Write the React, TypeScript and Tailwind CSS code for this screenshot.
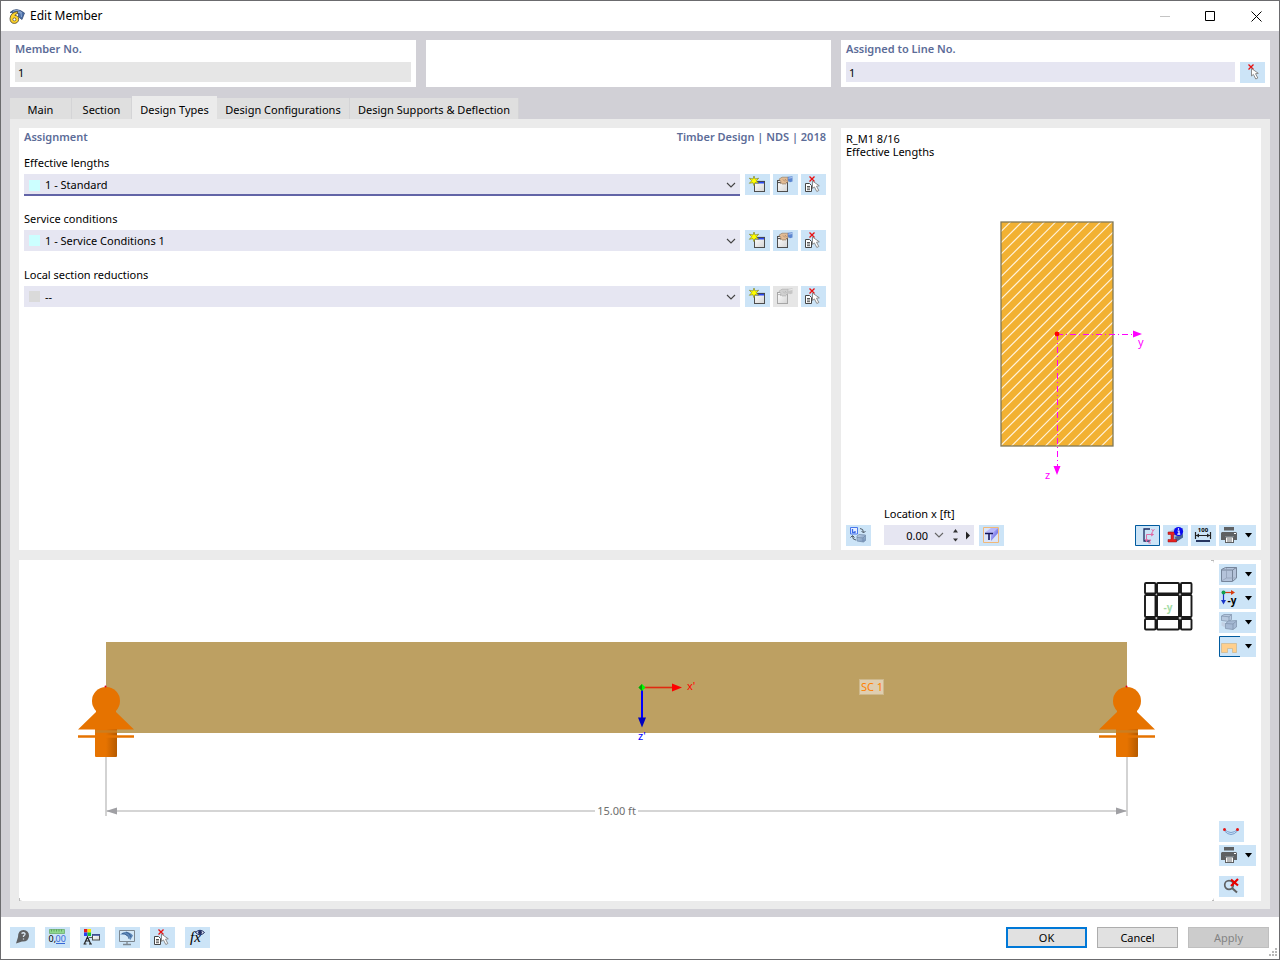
import { useState, type ButtonHTMLAttributes, type ReactNode } from "react"
import { clsx } from "clsx"

interface ToolButtonProps extends ButtonHTMLAttributes<HTMLButtonElement> {
  label: string
  children: ReactNode
}

// 25x21 toolbar button, every icon is drawn on the same 25x21 grid
function ToolButton({ label, children, className, ...rest }: ToolButtonProps) {
  return (
    <button
      type="button"
      aria-label={label}
      className={clsx("h-[21px] w-[25px] shrink-0 bg-[#cce4f7] disabled:bg-[#e6e6e6]", className)}
      {...rest}
    >
      <svg viewBox="0 0 25 21" className="block h-[21px] w-[25px]" aria-hidden="true">
        {children}
      </svg>
    </button>
  )
}

// toolbar button with a drop-down arrow
function MenuButton({ label, active, children }: { label: string; active?: boolean; children: ReactNode }) {
  return (
    <button type="button" aria-label={label} className="h-[21px] w-[37px] shrink-0 bg-[#cce4f7]">
      <svg viewBox="0 0 37 21" className="block h-[21px] w-[37px]" aria-hidden="true">
        {children}
        {active && <path d="M21 .5H.5v20H21" fill="none" stroke="#005a9e" />}
        <path d="M26 8h7l-3.5 4.5z" fill="#000" />
      </svg>
    </button>
  )
}

function RedCross({ x, y }: { x: number; y: number }) {
  return (
    <path
      d="M0 0l5 5M5 0l-5 5"
      transform={`translate(${x} ${y})`}
      stroke="#e81010"
      strokeWidth="1.3"
    />
  )
}

function Pointer({ x, y }: { x: number; y: number }) {
  return (
    <path
      d="M0 0v7.5l1.9-1.6 2.4 4.6 2-1-2.3-4.3 2.8-.4z"
      transform={`translate(${x} ${y})`}
      fill="#fff"
      stroke="#808080"
      strokeWidth=".9"
    />
  )
}

function SelectIcon() {
  return (
    <>
      <RedCross x={8.5} y={2.5} />
      <Pointer x={11.5} y={6.5} />
    </>
  )
}

function SelectFromListIcon() {
  return (
    <>
      <path d="M4.5 9.5h4l2 2v6h-6z" fill="#fff" stroke="#444" />
      <path d="M6 12.5h3M6 14h3M6 15.7h3" stroke="#444" strokeWidth=".9" />
      <RedCross x={8.5} y={2.5} />
      <Pointer x={11.5} y={7} />
    </>
  )
}

function NewIcon() {
  return (
    <>
      <rect x="9.5" y="7.5" width="10" height="10" fill="url(#winFill)" stroke="#4d4d4d" />
      <path d="M10 8.5h9" stroke="#2848f0" strokeWidth="2" />
      <path d="M9 7.4h11" stroke="#444" strokeWidth=".8" />
      <path
        d="M9 2l1 3 3.700-.8-2.400 2.600 2.400 2.500-3.700-.6-1 3-1-3-3.700.6 2.400-2.500-2.400-2.600L8 5z"
        fill="#ff0"
        stroke="#77771c"
        strokeWidth=".6"
      />
    </>
  )
}

function EditIcon({ muted }: { muted?: boolean }) {
  return (
    <>
      <rect x="4.500" y="6.500" width="10" height="11" fill="url(#winFill)" stroke={muted ? "#a6a6a6" : "#4d4d4d"} />
      <path d="M5 8.500h9" stroke={muted ? "#bdbdbd" : "#555"} strokeWidth="1.200" />
      <path
        d="M6 5.200l3-2h6v4.800l-1.500.5-1.200 1.800-1.300-.8-1.200.9-1-1.400-1.300.6.2-2.200z"
        fill={muted ? "#d0d0d0" : "#e2bb94"}
        stroke={muted ? "#aaa" : "#8d7258"}
        strokeWidth=".6"
      />
      <path d="M10 5.500l2 2M12 5l1.500 2" stroke={muted ? "#aaa" : "#8d7258"} strokeWidth=".6" />
      <path d="M14.800 2.800l4.700-.6v5.300l-2.500.8-2.200-1.500z" fill={muted ? "#c6c6c6" : "#5c86d0"} />
      <path d="M15.500 4.200l4-.7" stroke={muted ? "#eee" : "#b9cdf0"} />
    </>
  )
}

function PrinterIcon() {
  return (
    <>
      <path d="M5 2h10v3.500H5zM3 7h14l1 1v7h-3v-3.500H6V15H2V8z" fill="#5f6163" />
      <rect x="6.500" y="12" width="8" height="5.500" fill="#fff" stroke="#5f6163" />
      <path d="M8 14h5M8 16h5" stroke="#5f6163" strokeWidth=".9" />
      <path d="M15 8.500h2" stroke="#fff" />
    </>
  )
}

const inputText = "text-[11px] leading-[14px] text-black outline-none"

interface AssignmentRowProps {
  id: string
  label: string
  value: string
  swatch: string
  focused?: boolean
  editable?: boolean
}

function AssignmentRow({ id, label, value, swatch, focused, editable = true }: AssignmentRowProps) {
  return (
    <div className="flex flex-col gap-1">
      <label htmlFor={id} className="leading-[14px]">
        {label}
      </label>
      <div className="flex h-[22px] items-start gap-[3px]">
        <div
          className={clsx(
            "relative mr-[2px] flex flex-1 items-center gap-[5px] bg-[#e6e6f2] pl-[5px]",
            focused ? "h-[22px] shadow-[inset_0_-2px_#6264a7]" : "h-[21px]",
          )}
        >
          <span className={clsx("size-[11px]", swatch)} />
          <select id={id} className={clsx("h-full flex-1 appearance-none bg-transparent", inputText)}>
            <option>{value}</option>
          </select>
          <svg viewBox="0 0 10 6" className="pointer-events-none absolute right-1 h-[6px] w-[10px]" aria-hidden="true">
            <path d="M1 1l4 4 4-4" fill="none" stroke="#444" strokeWidth="1.100" />
          </svg>
        </div>
        <ToolButton label={`New ${label}`}>
          <NewIcon />
        </ToolButton>
        <ToolButton label={`Edit ${label}`} disabled={!editable}>
          <EditIcon muted={!editable} />
        </ToolButton>
        <ToolButton label={`Select ${label}`}>
          <SelectFromListIcon />
        </ToolButton>
      </div>
    </div>
  )
}

// hatch lines run at 45 degrees, x + y stays constant along each one
const hatch = Array.from({ length: 29 }, (_, i) => 1232.6 + i * 11.25)

function SectionDrawing() {
  return (
    <svg viewBox="846 158 410 349" className="min-h-0 w-full flex-1" role="img" aria-label="Cross-section">
      <clipPath id="sectionClip">
        <rect x="1001" y="222" width="112" height="224" />
      </clipPath>
      <rect x="1001" y="222" width="112" height="224" fill="#f2b132" />
      <g clipPath="url(#sectionClip)" stroke="#fff3dc" strokeWidth="1.100">
        {hatch.map((sum) => (
          <path key={sum} d={`M1001 ${sum - 1001}L1113 ${sum - 1113}`} />
        ))}
      </g>
      <rect x="1001" y="222" width="112" height="224" fill="none" stroke="#807858" strokeWidth="1.300" />
      <path d="M1057 334.500h77" stroke="#f0f" strokeDasharray="6 3 1 3" />
      <path d="M1057.500 334v132" stroke="#f0f" strokeDasharray="6 3 1 3" />
      <path d="M1133 330.500l9 3.500-9 3.500zM1053.500 466h7l-3.500 9z" fill="#f0f" />
      <circle cx="1057" cy="334" r="2.400" fill="#f00" />
      <g fill="#f0f" className="text-[11px]">
        <text x="1138" y="346">y</text>
        <text x="1045" y="479">z</text>
      </g>
    </svg>
  )
}

function Support({ x }: { x: number }) {
  return (
    <g transform={`translate(${x} 0)`}>
      <path d="M0 757v59" stroke="#c8c8c8" strokeWidth="1.600" />
      <rect x="-11" y="728" width="22" height="29" rx="1" fill="url(#trunk)" />
      <circle cx="0" cy="701" r="14" fill="#e67300" />
      <path d="M-10 711h20v1l18 17.500h-56l18-17.500z" fill="#e67300" />
      <path d="M-11 731.500h22" stroke="#cb7d20" strokeWidth="2.500" />
      <path d="M-28 736.500h56" stroke="#e67300" strokeWidth="2.600" />
      <circle cx="-.5" cy="686.500" r="1" fill="#e00020" />
    </g>
  )
}

const cubeCells = [
  [1145, 10.5],
  [1157, 22],
  [1181, 10.5],
]

function MemberDrawing() {
  return (
    <svg viewBox="19 560 1195 341" className="min-w-0 flex-1" role="img" aria-label="Member view">
      <defs>
        <linearGradient id="trunk">
          <stop offset="0" stopColor="#e67300" />
          <stop offset=".5" stopColor="#e67300" />
          <stop offset="1" stopColor="#b55a00" />
        </linearGradient>
      </defs>
      <path d="M1211 560.500h3v2M1212 900.500h2v-2M19.500 898v3h2" fill="none" stroke="#bbb" />
      <rect x="106" y="642" width="1021" height="91" fill="#bda062" />

      <Support x={106} />
      <Support x={1127} />

      {/* dimension line */}
      <path d="M107 811h488M638 811h488" stroke="#c8c8c8" strokeWidth="1.600" />
      <path d="M106 811l11-3.500v7zM1127 811l-11-3.500v7z" fill="#a0a0a4" />
      <text x="616.500" y="815" textAnchor="middle" fill="#6e6e6e" className="text-[11px]">
        15.00 ft
      </text>

      {/* local axes */}
      <path d="M642 687.500h31" stroke="#e02a10" strokeWidth="1.600" />
      <path d="M672 683.500l10 4-10 4z" fill="#f00" />
      <path d="M642 688v31" stroke="#00f" strokeWidth="2" />
      <path d="M638 717.500h8l-4 10z" fill="#0000c0" />
      <path d="M642 684l3.500 3.500-3.500 3.500-3.500-3.500z" fill="#0f0" />
      <path d="M642 684v7l-3.500-3.500z" fill="#0a9a0a" />
      <g className="text-[11px]">
        <text x="687" y="690" fill="#f00">x'</text>
        <text x="638" y="740" fill="#00f">z'</text>
      </g>

      <rect x="859.500" y="679.500" width="24" height="15" fill="#dfceb0" stroke="#cdb88c" />
      <text x="861" y="691" fill="#ff8000" className="text-[11px]">
        SC 1
      </text>

      {/* view cube */}
      <g fill="#fff" stroke="#1a1a1a" strokeWidth="1.900">
        {cubeCells.map(([x, w]) =>
          cubeCells.map(([y, h]) => (
            <rect key={`${x}-${y}`} x={x} y={y - 562} width={w} height={h} rx="1" />
          )),
        )}
      </g>
      <path
        d="M1156.300 584v9M1156.300 597v20M1156.300 620v9M1180 584v9M1180 597v20M1180 620v9M1146 594.300h9M1159 594.300h19M1182 594.300h9M1146 618h9M1159 618h19M1182 618h9"
        stroke="#1a1a1a"
        strokeWidth="2.400"
      />
      <text x="1168" y="611" textAnchor="middle" fill="#a3dca6" className="text-[10px] font-bold">
        -y
      </text>
    </svg>
  )
}

const tabs = [
  { name: "Main", width: "w-[62px]" },
  { name: "Section", width: "w-[60px]" },
  { name: "Design Types", width: "w-[85px]" },
  { name: "Design Configurations", width: "w-[133px]" },
  { name: "Design Supports & Deflection", width: "w-[169px]" },
]

const heading = "font-semibold leading-[14px] text-[#5c6c98]"
const dialogButton = "h-[21px] w-[81px] text-[11px] leading-[14px]"

export default function App() {
  const [activeTab, setActiveTab] = useState("Design Types")
  const [memberNo, setMemberNo] = useState("1")
  const [lineNo, setLineNo] = useState("1")
  const [location, setLocation] = useState("0.00")

  return (
    <div className="relative flex min-h-screen flex-col border border-[#6b6b6e] bg-white font-['Noto_Sans','Open_Sans',sans-serif] text-[11px] text-black">
      {/* shared gradients */}
      <svg className="absolute size-0" aria-hidden="true">
        <linearGradient id="winFill" x1="0" y1="0" x2="1" y2="1">
          <stop offset="0" stopColor="#fff" />
          <stop offset="1" stopColor="#d4d4d4" />
        </linearGradient>
        <linearGradient id="steel" x1="0" y1="0" x2="1" y2="1">
          <stop offset="0" stopColor="#c3d4e8" />
          <stop offset="1" stopColor="#6f8fb8" />
        </linearGradient>
        <linearGradient id="violet" x1="0" y1="0" x2="1" y2="1">
          <stop offset="0" stopColor="#d2d2ff" />
          <stop offset="1" stopColor="#4a4ae0" />
        </linearGradient>
      </svg>

      {/* title bar */}
      <header className="flex h-[30px] shrink-0 items-center pl-2">
        <svg viewBox="0 0 16 16" className="size-4" aria-hidden="true">
          <path d="M1 4.500Q7-1.500 15.500 5L13 11.500 9.500 9V5z" fill="#4a6ea8" stroke="#2b4268" strokeWidth=".7" />
          <path d="M4 3.500Q8 .5 13 5M8 4l4 1 .5 4" fill="none" stroke="#9db8dc" strokeWidth=".8" />
          <path
            d="M8.500 3.500Q1.500 4.500 1 10.500c0 3.500 2 4.900 4.300 4.900s4.400-1.500 4.400-4.200-1.800-3.800-3.800-3.800c.3-1 1.300-1.500 2.600-1.700z"
            fill="#ffd42a"
            stroke="#4c4630"
            strokeWidth=".8"
          />
          <circle cx="5.400" cy="11.400" r="1.500" fill="#fff" stroke="#4c4630" strokeWidth=".7" />
        </svg>
        <h1 className="ml-[5px] flex-1 text-xs">Edit Member</h1>
        <button type="button" aria-label="Minimize" disabled className="flex h-full w-[43px] items-center justify-center">
          <svg viewBox="0 0 11 11" className="size-[11px]">
            <path d="M0 5.500h10" stroke="#c4c4c4" />
          </svg>
        </button>
        <button type="button" aria-label="Maximize" className="flex h-full w-[47px] items-center justify-center">
          <svg viewBox="0 0 11 11" className="size-[11px]">
            <path d="M.5.5h9v9h-9z" fill="none" stroke="#000" />
          </svg>
        </button>
        <button type="button" aria-label="Close" className="flex h-full w-[45px] items-center justify-center">
          <svg viewBox="0 0 11 11" className="size-[11px]">
            <path d="M.5.5l10 10M10.500.5l-10 10" stroke="#000" />
          </svg>
        </button>
      </header>

      <main className="flex flex-1 flex-col bg-[#d1d0d6] px-[9px] pt-[9px] pb-2">
        {/* member and line numbers */}
        <div className="grid h-[47px] shrink-0 grid-cols-[406fr_405fr_429fr] gap-[10px]">
          <section className="flex flex-col gap-[6px] bg-white px-[5px] pt-[2px]">
            <label htmlFor="member-no" className={heading}>
              Member No.
            </label>
            <input
              id="member-no"
              readOnly
              value={memberNo}
              onChange={(e) => setMemberNo(e.target.value)}
              className={clsx("h-5 w-full bg-[#e6e6e6] px-[3px]", inputText)}
            />
          </section>
          <section className="bg-white" />
          <section className="flex flex-col gap-[6px] bg-white px-[5px] pt-[2px]">
            <label htmlFor="line-no" className={heading}>
              Assigned to Line No.
            </label>
            <div className="flex gap-[5px]">
              <input
                id="line-no"
                value={lineNo}
                onChange={(e) => setLineNo(e.target.value)}
                className={clsx("h-5 min-w-0 flex-1 bg-[#e6e6f2] px-[3px]", inputText)}
              />
              <ToolButton label="Select line">
                <SelectIcon />
              </ToolButton>
            </div>
          </section>
        </div>

        <div role="tablist" className="mt-[9px] flex h-[23px] shrink-0 items-end">
          {tabs.map(({ name, width }) => (
            <button
              key={name}
              type="button"
              role="tab"
              aria-selected={name === activeTab}
              onClick={() => setActiveTab(name)}
              className={clsx(
                "text-center leading-[14px] whitespace-nowrap",
                width,
                name === activeTab
                  ? "h-[23px] bg-[#ebebeb] pt-1"
                  : "h-[21px] border-r border-[#d4d4d6] bg-[#dfdfdf] pt-[2px]",
              )}
            >
              {name}
            </button>
          ))}
        </div>

        <div className="flex flex-1 flex-col gap-[10px] bg-[#ebebeb] px-[9px] pt-[9px] pb-2">
          <div className="grid flex-[422_0_auto] grid-cols-[812fr_420fr] gap-[10px]">
            {/* assignment */}
            <section className="flex flex-col gap-4 bg-white px-[5px] pt-[2px]">
              <div className="-mb-1 flex justify-between">
                <h2 className={heading}>Assignment</h2>
                <span className={heading}>Timber Design | NDS | 2018</span>
              </div>
              <AssignmentRow id="effective" label="Effective lengths" value="1 - Standard" swatch="bg-[#ccffff]" focused />
              <AssignmentRow id="service" label="Service conditions" value="1 - Service Conditions 1" swatch="bg-[#ccffff]" />
              <AssignmentRow
                id="reductions"
                label="Local section reductions"
                value="--"
                swatch="bg-[#dadada]"
                editable={false}
              />
            </section>

            {/* section preview */}
            <section className="flex min-h-[422px] flex-col bg-white px-[5px] py-1">
              <p className="leading-[13px]">R_M1 8/16</p>
              <p className="leading-[13px]">Effective Lengths</p>
              <SectionDrawing />
              <div className="flex items-end gap-[3px]">
                <ToolButton label="Switch view" className="mr-[10px]">
                  <path d="M4.500 2.500h7v6.500h-7z" fill="#e6eeff" stroke="#4a78ec" />
                  <path d="M6.500 4v3.500H9V6" fill="none" stroke="#3b6ae6" strokeWidth="1.300" />
                  <path d="M14 3.500q3.500 0 3.500 4M15.500 6l2 2 2-2M10 15q-3.500 0-3.500-4M4.500 12.500l2-2 2 2" fill="none" stroke="#4d5966" />
                  <path d="M11 11l2-1.500 6.500.5v5.500l-2 1.500-6.500-1z" fill="url(#steel)" stroke="#6f88a8" strokeWidth=".7" />
                  <path d="M11 12.500l6 .5v3.500M17 13l2-2" fill="none" stroke="#6f88a8" strokeWidth=".7" />
                </ToolButton>
                <div className="flex flex-col gap-1">
                  <label htmlFor="location" className="leading-[14px]">
                    Location x [ft]
                  </label>
                  <div className="mb-px flex h-5 w-[90px] items-center bg-[#e6e6f2]">
                    <input
                      id="location"
                      value={location}
                      onChange={(e) => setLocation(e.target.value)}
                      className={clsx("h-full w-[44px] text-right", inputText)}
                    />
                    <svg viewBox="1 0 46 20" className="h-5 w-[46px]" aria-hidden="true">
                      <path d="M8 8l4 4 4-4" fill="none" stroke="#666" strokeWidth="1.100" />
                      <path d="M26 7.500h5L28.500 4zM26 13.500h5L28.500 16.500z" fill="#333" />
                      <path d="M39 6.500v8l4-4z" fill="#222" />
                    </svg>
                  </div>
                </div>
                <ToolButton label="Stress points" className="ml-[2px]">
                  <path d="M4.500 2.500h15v15h-15z" fill="#dbe4f8" stroke="#f0b878" />
                  <path d="M6 7.500L12 3h7l-6 5z" fill="#b9b9fa" />
                  <path d="M13 8l6-5v5l-7 8v-6z" fill="url(#violet)" />
                  <path d="M6 8.500h8M10 8.500V15" stroke="#14145a" strokeWidth="1.600" />
                </ToolButton>
                <div className="ml-auto flex gap-[3px]">
                  <ToolButton label="Show axes">
                    <path d="M.5.5h24v20H.5z" fill="none" stroke="#005a9e" />
                    <path d="M15 4H9v12h6" fill="none" stroke="#1c2a60" strokeWidth="1.300" />
                    <path d="M11.500 17V9.500H18M10 14l1.500 2.500L13 14M16 8l2.500 1.500L16 11" fill="none" stroke="#e0609c" strokeWidth=".9" />
                    <path d="M16.500 4l1.500 2 1.500-2M18 6l-1 2M13.500 15h2.500l-2.500 3H16" fill="none" stroke="#e0609c" strokeWidth=".8" />
                  </ToolButton>
                  <ToolButton label="Section info">
                    <path d="M6 6.500l7-3.500h7v9l-7 5z" fill="url(#steel)" />
                    <path d="M12 12l8-3v3.500L13 17z" fill="#4a6595" />
                    <path d="M5 7h8.500v2.500h-3v5h3V17H5v-2.500h3v-5H5z" fill="#e82020" stroke="#901515" strokeWidth=".5" />
                    <circle cx="15.500" cy="6.500" r="4.600" fill="#0a0af0" />
                    <path d="M14.500 6H16v3.200M14.300 9.200h3M15.500 3.300v1.400" fill="none" stroke="#fff" strokeWidth="1.200" />
                  </ToolButton>
                  <ToolButton label="Show dimensions">
                    <text x="12" y="7" textAnchor="middle" className="text-[6px] font-bold">
                      100
                    </text>
                    <path d="M4.500 7v7M19.500 7v7M5 10.500h14" stroke="#222" strokeWidth="1.200" />
                    <path d="M5 10.500l3-2v4zM19 10.500l-3-2v4z" fill="#222" />
                    <path d="M5 16h14" stroke="#26355f" strokeWidth="2" />
                  </ToolButton>
                  <MenuButton label="Print section">
                    <PrinterIcon />
                  </MenuButton>
                </div>
              </div>
            </section>
          </div>

          {/* member view */}
          <section className="flex min-h-[341px] flex-[341_0_auto] bg-white">
            <MemberDrawing />
            <div className="flex flex-col gap-[3px] px-[5px] py-1">
              <MenuButton label="Render mode">
                <path d="M2.500 5.500l4-2h11v10.500l-4 3.500h-11z" fill="#b4c3da" stroke="#76859a" />
                <path d="M2.500 6h11v11M13.500 6l4-2.500" fill="none" stroke="#76859a" />
                <path d="M7.500 4v10h10M7.500 14l-5 3" fill="none" stroke="#8f9eb4" strokeWidth=".7" />
              </MenuButton>
              <MenuButton label="View direction">
                <path d="M4.500 5v9" stroke="#1834c8" strokeWidth="1.200" />
                <path d="M2 12h5l-2.500 4.500z" fill="#1834c8" />
                <path d="M5 4.500h8" stroke="#d83c10" strokeWidth="1.200" />
                <path d="M12 2l4 2.500-4 2.500z" fill="#d83c10" />
                <circle cx="4.500" cy="4.500" r="2" fill="#14a050" />
                <text x="8.500" y="16" className="text-[10px] font-bold">
                  -y
                </text>
              </MenuButton>
              <MenuButton label="Clipping">
                <path d="M2.500 4l2.500-1.500h7.500v5L10 9.500 2.500 8.500z" fill="#b7c8de" stroke="#7d8fa9" strokeWidth=".7" />
                <path d="M2.500 4l7.500.8 2.500-2.300M10 4.800v4.700" fill="none" stroke="#7d8fa9" strokeWidth=".7" />
                <path d="M6.500 11.500L9.500 9l8-.5V15l-3.500 2.500-7.500-1z" fill="#a5b9d4" stroke="#7d8fa9" strokeWidth=".7" />
                <path d="M6.500 11.500l7.500.5 3.500-3M14 12v5.500" fill="none" stroke="#7d8fa9" strokeWidth=".7" />
                <path d="M2.500 10l3.500.5v5l-3.500-2z" fill="#c3d1e4" />
              </MenuButton>
              <MenuButton label="Loads" active>
                <path d="M2.500 7.500h15v9h-4v-4h-5v4h-6z" fill="#ffcf8c" stroke="#c9b48e" strokeWidth=".7" />
              </MenuButton>
              <ToolButton label="Deflection" className="mt-auto">
                <path d="M5.500 8.500q6.500 6 13 0M5.500 10q6.500 7 13 0" fill="none" stroke="#6f95c8" strokeWidth=".9" />
                <circle cx="5.500" cy="8.500" r="1.500" fill="#e41414" />
                <circle cx="18.500" cy="8.500" r="1.500" fill="#e41414" />
              </ToolButton>
              <MenuButton label="Print member">
                <PrinterIcon />
              </MenuButton>
              <ToolButton label="Reset zoom" className="mt-[7px]">
                <circle cx="10" cy="9" r="4.300" fill="none" stroke="#5f6163" strokeWidth="1.700" />
                <path d="M13 12l5 4.500" stroke="#5f6163" strokeWidth="2" />
                <path d="M12 3.500l7 6M19 3l-7 7" stroke="#e80000" strokeWidth="2.200" />
              </ToolButton>
            </div>
          </section>
        </div>
      </main>

      <footer className="flex h-[42px] shrink-0 items-center gap-[10px] pr-[10px] pb-px pl-[9px]">
        <ToolButton label="Help">
          <path d="M6 16.500l2-6.500q0-7 5.500-7 5.500.5 5.500 6-.5 6-7 5.500z" fill="#5f6163" />
          <path d="M11.500 6.500q2-1.500 3.500 0 .5 1.500-1.500 2.500v1M13.500 11.500v1" fill="none" stroke="#dbe9f5" strokeWidth="1.300" />
        </ToolButton>
        <ToolButton label="Units">
          <path d="M4.500 2.500h15v4h-15z" fill="#8fd88f" stroke="#62a862" strokeWidth=".7" />
          <path d="M6.500 2.500v2M9 2.500v2M11.500 2.500v2M14 2.500v2M16.500 2.500v2" stroke="#4a904a" strokeWidth=".7" />
          <text x="3.500" y="15" className="text-[9px]">
            0,
          </text>
          <text x="10.500" y="15" fill="#3467d6" className="text-[9px]">
            00
          </text>
          <path d="M11 16.500h9" stroke="#3467d6" />
        </ToolButton>
        <ToolButton label="Display properties">
          <path d="M4 2h3.500v3.500H4z" fill="#e81c1c" />
          <path d="M7.500 2H11v3.500H7.500z" fill="#f5e400" />
          <path d="M4 5.500h3.500V9H4z" fill="#2840f0" />
          <path d="M7.500 5.500H11V9H7.500z" fill="#18c030" />
          <path d="M4.500 16.500l3-6.500 3 6.500M5.500 14h4M3.500 17h3M9 17h3" fill="none" stroke="#222" strokeWidth="1.200" />
          <rect x="12.500" y="7.500" width="7" height="5.500" fill="url(#winFill)" stroke="#4d4d4d" />
          <path d="M12 8h8" stroke="#3c4fa0" strokeWidth="1.600" />
          <path d="M9 10.500h3" stroke="#555" />
        </ToolButton>
        <ToolButton label="Graphic settings">
          <path d="M4.500 3.500h15v11h-15z" fill="#d4e8f7" stroke="#7c8790" />
          <path d="M12 15v2M8 17.500h8" stroke="#7c8790" strokeWidth="1.300" />
          <path d="M5 7.500q6.500-6 13 1L15 13.500q-.5-4-3-4.500l-2-1.500z" fill="#5d87b8" />
          <path d="M7 6.500q6 .5 7 5.500M11 5q4 1 5 5" fill="none" stroke="#2f5585" strokeWidth=".7" />
        </ToolButton>
        <ToolButton label="Select in list">
          <SelectFromListIcon />
        </ToolButton>
        <ToolButton label="Formula">
          <text x="5" y="15" className="font-['Liberation_Serif',serif] text-[15px] italic">
            fx
          </text>
          <path d="M10.500 5.500q4.500-4.500 9 0-4.500 4.500-9 0z" fill="#dfe4f4" stroke="#1f2c60" />
          <circle cx="15" cy="5.500" r="1.900" fill="#1f2c60" />
        </ToolButton>

        <button type="button" className={clsx(dialogButton, "ml-auto border-2 border-[#0078d7] bg-[#e1e1e1]")}>
          OK
        </button>
        <button type="button" className={clsx(dialogButton, "border border-[#adadad] bg-[#e1e1e1]")}>
          Cancel
        </button>
        <button type="button" disabled className={clsx(dialogButton, "border border-[#bfbfbf] bg-[#cccccc] text-[#838383]")}>
          Apply
        </button>
      </footer>

      {/* resize grip */}
      <svg viewBox="0 0 9 9" className="absolute right-[2px] bottom-[2px] size-[9px]" aria-hidden="true">
        <path d="M7 1h2M4 4h2M7 4h2M1 7h2M4 7h2M7 7h2" stroke="#b8b8b8" strokeWidth="2" />
      </svg>
    </div>
  )
}
